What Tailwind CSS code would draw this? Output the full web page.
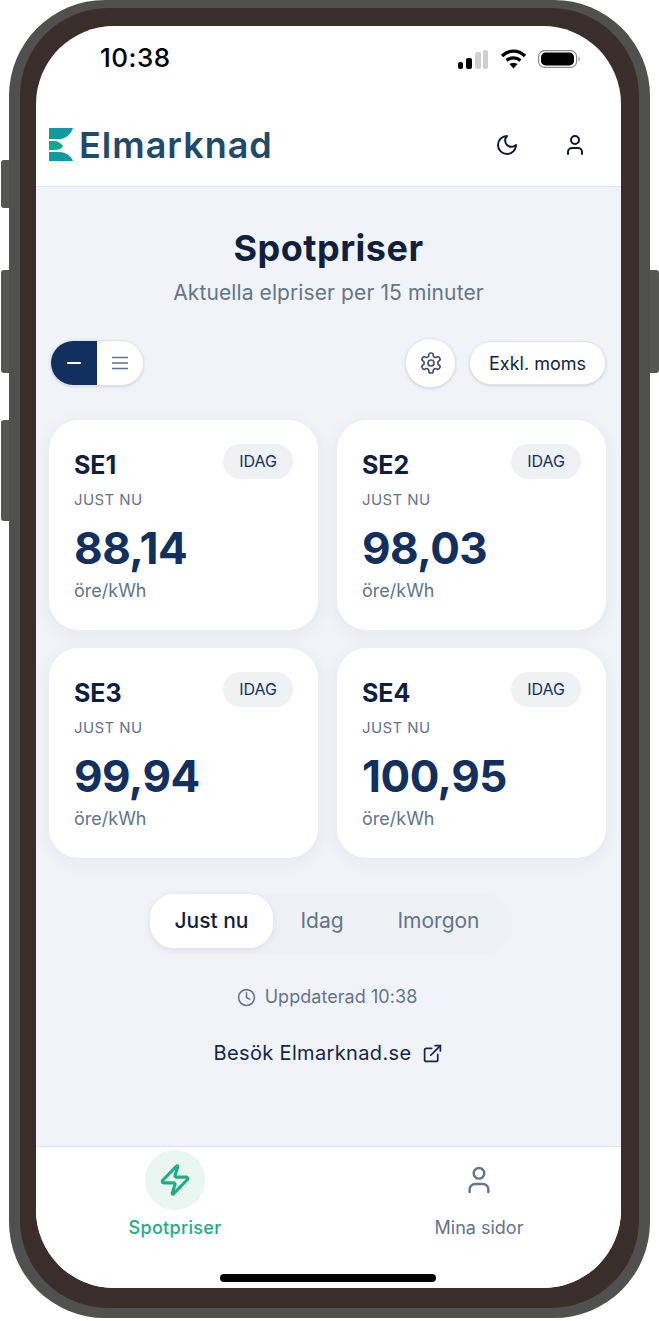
<!DOCTYPE html>
<html lang="sv">
<head>
    <meta charset="UTF-8">
    <meta name="viewport" content="width=device-width, initial-scale=1.0">
    <title>Elmarknad Spotpriser</title>
    <script src="https://cdn.jsdelivr.net/npm/@tailwindcss/browser@4"></script>
</head>
<body class="bg-white font-['Inter',sans-serif]">
    <div class="relative h-[1321px] w-[659px] overflow-hidden">
        <!-- Side buttons -->
        <div class="absolute left-[1px] top-[160px] h-[48px] w-[11px] rounded-l-[3px] bg-[#565654]"></div>
        <div class="absolute left-[1px] top-[270px] h-[103px] w-[11px] rounded-l-[3px] bg-[#565654]"></div>
        <div class="absolute left-[1px] top-[420px] h-[101px] w-[11px] rounded-l-[3px] bg-[#565654]"></div>
        <div class="absolute left-[647px] top-[270px] h-[103px] w-[12px] rounded-r-[3px] bg-[#565654]"></div>

        <!-- Phone frame -->
        <div class="absolute left-[9px] top-0 h-[1318px] w-[641px] rounded-[96px] bg-[#50504e] pl-[11px] pr-[11px] pt-[8px] pb-[10px]">
            <div class="h-full w-full rounded-[88px] bg-[#3a2e2d] pl-[16px] pr-[18px] pt-[18px] pb-[20px]">
                <div class="flex h-full w-full flex-col overflow-hidden rounded-[78px] bg-white">
                    <!-- Status bar -->
                    <div class="flex h-[62px] shrink-0 items-end justify-between pl-[64px] pr-[40px]">
                        <span class="mb-[14px] text-[26px] leading-[32px] font-medium tracking-[0.5px] text-black">10:38</span>
                        <div class="mb-[19px] flex items-center gap-[11px]">
                            <svg width="31" height="19" viewBox="0 0 31 19">
                                <rect x="0" y="12" width="5" height="7" rx="2" fill="#000"/>
                                <rect x="8" y="8" width="6" height="11" rx="2" fill="#000"/>
                                <rect x="17" y="2" width="6" height="17" rx="2" fill="#cfcfcf"/>
                                <rect x="25" y="0" width="5" height="19" rx="2" fill="#cfcfcf"/>
                            </svg>
                            <svg width="27" height="20" viewBox="0 0 27 20" fill="none" stroke="#000" stroke-width="3.4">
                                <path d="M2 7 C9 0.5 18 0.5 25 7"/>
                                <path d="M6.5 11.5 C10.5 8 16.5 8 20.5 11.5"/>
                                <path d="M13.5 19.5 L9.5 15 C11.5 13.6 15.5 13.6 17.5 15 Z" fill="#000" stroke="none"/>
                            </svg>
                            <svg width="43" height="20" viewBox="0 0 43 20" fill="none">
                                <rect x="0.6" y="1.6" width="38" height="16.8" rx="6" stroke="#8a8a8a" stroke-width="1.2"/>
                                <rect x="3" y="3.6" width="33" height="12.8" rx="4.5" fill="#000"/>
                                <path d="M40.5 7.5 C42 8 42 12 40.5 12.5 Z" fill="#8a8a8a"/>
                            </svg>
                        </div>
                    </div>

                    <!-- Header -->
                    <header class="flex h-[99px] shrink-0 items-center justify-between border-b border-[#e3e8ee] pl-[13px] pr-[34px] pt-[16px]">
                        <div class="flex items-center gap-[6px]">
                            <svg width="24" height="34" viewBox="0 0 24 34">
                                <path d="M0 0 H24 C22 6 17 11 10 11 H0 Z" fill="#0f9aa0"/>
                                <path d="M0 13 H5 C9 13 12 15 14 18 C12 21 9 22 5 22 H0 Z" fill="#12a58f"/>
                                <path d="M0 24 H10 C17 24 22 28 24 33 H0 Z" fill="#0f9aa0"/>
                            </svg>
                            <span class="text-[36px] leading-none font-semibold tracking-[1px] text-[#1f4a6b]">Elmarknad</span>
                        </div>
                        <div class="flex items-center gap-[44px]">
                            <svg class="h-[24px] w-[24px]" viewBox="0 0 24 24" fill="none" stroke="#0f1b33" stroke-width="2" stroke-linecap="round" stroke-linejoin="round">
                                <path d="M12 3a6 6 0 0 0 9 9 9 9 0 1 1-9-9Z"/>
                            </svg>
                            <svg class="h-[24px] w-[24px]" viewBox="0 0 24 24" fill="none" stroke="#0f1b33" stroke-width="2" stroke-linecap="round" stroke-linejoin="round">
                                <circle cx="12" cy="7" r="4"/>
                                <path d="M19 21v-2a4 4 0 0 0-4-4H9a4 4 0 0 0-4 4v2"/>
                            </svg>
                        </div>
                    </header>

                    <!-- Main -->
                    <main class="flex min-h-0 flex-1 flex-col items-center bg-[#f0f4f8] px-[13px] pt-[40px]">
                        <h1 class="text-[36px] leading-[42px] font-bold tracking-[0.5px] text-[#0f1f3d]">Spotpriser</h1>
                        <p class="mt-[10px] text-[21px] leading-[28px] tracking-[0.1px] text-[#64748b]">Aktuella elpriser per 15 minuter</p>

                        <div class="mt-[31px] flex w-[557px] items-center justify-between self-start">
                            <div class="ml-[1px] flex h-[46px] w-[94px] overflow-hidden rounded-full border border-[#e0e5ea] bg-white shadow-sm">
                                <div class="flex w-[46px] items-center justify-center bg-[#12305f]">
                                    <span class="h-[2px] w-[14px] rounded bg-white"></span>
                                </div>
                                <div class="flex flex-1 items-center justify-center">
                                    <svg class="h-[20px] w-[20px]" viewBox="0 0 20 20" fill="none" stroke="#64748b" stroke-width="1.6">
                                        <path d="M2 4.5h16M2 10h16M2 15.5h16"/>
                                    </svg>
                                </div>
                            </div>
                            <div class="flex items-center gap-[13px]">
                                <div class="flex h-[50px] w-[51px] items-center justify-center rounded-full border border-[#e0e5ea] bg-white shadow-sm">
                                    <svg class="h-[24px] w-[24px]" viewBox="0 0 24 24" fill="none" stroke="#475569" stroke-width="1.7" stroke-linecap="round" stroke-linejoin="round">
                                        <path d="M12.22 2h-.44a2 2 0 0 0-2 2v.18a2 2 0 0 1-1 1.73l-.43.25a2 2 0 0 1-2 0l-.15-.08a2 2 0 0 0-2.73.73l-.22.38a2 2 0 0 0 .73 2.73l.15.1a2 2 0 0 1 1 1.72v.51a2 2 0 0 1-1 1.74l-.15.09a2 2 0 0 0-.73 2.73l.22.38a2 2 0 0 0 2.73.73l.15-.08a2 2 0 0 1 2 0l.43.25a2 2 0 0 1 1 1.73V20a2 2 0 0 0 2 2h.44a2 2 0 0 0 2-2v-.18a2 2 0 0 1 1-1.73l.43-.25a2 2 0 0 1 2 0l.15.08a2 2 0 0 0 2.73-.73l.22-.39a2 2 0 0 0-.73-2.73l-.15-.08a2 2 0 0 1-1-1.74v-.5a2 2 0 0 1 1-1.74l.15-.09a2 2 0 0 0 .73-2.73l-.22-.38a2 2 0 0 0-2.73-.73l-.15.08a2 2 0 0 1-2 0l-.43-.25a2 2 0 0 1-1-1.73V4a2 2 0 0 0-2-2z"/>
                                        <circle cx="12" cy="12" r="3"/>
                                    </svg>
                                </div>
                                <div class="flex h-[44px] w-[137px] items-center justify-center rounded-full border border-[#e0e5ea] bg-white text-[18px] text-[#0f1f3d] shadow-sm">Exkl. moms</div>
                            </div>
                        </div>

                        <!-- Price cards -->
                        <div class="mt-[32px] grid w-[557px] grid-cols-2 gap-x-[19px] gap-y-[18px] self-start">
                            <div class="relative h-[210px] rounded-[30px] bg-white pl-[25px] pt-[27px] shadow-[0_4px_20px_rgba(15,31,61,0.05)]">
                                <span class="absolute right-[25px] top-[24px] flex h-[35px] w-[70px] items-center justify-center rounded-full bg-[#eef2f5] pb-[2px] text-[16px] text-[#12305f]">IDAG</span>
                                <div class="text-[25px] leading-[36px] font-bold text-[#0f1f3d]">SE1</div>
                                <div class="mt-[7px] text-[15px] leading-[20px] tracking-[0.4px] text-[#64748b]">JUST NU</div>
                                <div class="mt-[9px] text-[44px] leading-[58px] font-bold tracking-[-0.5px] text-[#12305f]">88,14</div>
                                <div class="mt-[2px] text-[18px] leading-[24px] text-[#64748b]">öre/kWh</div>
                            </div>
                            <div class="relative h-[210px] rounded-[30px] bg-white pl-[25px] pt-[27px] shadow-[0_4px_20px_rgba(15,31,61,0.05)]">
                                <span class="absolute right-[25px] top-[24px] flex h-[35px] w-[70px] items-center justify-center rounded-full bg-[#eef2f5] pb-[2px] text-[16px] text-[#12305f]">IDAG</span>
                                <div class="text-[25px] leading-[36px] font-bold text-[#0f1f3d]">SE2</div>
                                <div class="mt-[7px] text-[15px] leading-[20px] tracking-[0.4px] text-[#64748b]">JUST NU</div>
                                <div class="mt-[9px] text-[44px] leading-[58px] font-bold tracking-[-0.5px] text-[#12305f]">98,03</div>
                                <div class="mt-[2px] text-[18px] leading-[24px] text-[#64748b]">öre/kWh</div>
                            </div>
                            <div class="relative h-[210px] rounded-[30px] bg-white pl-[25px] pt-[27px] shadow-[0_4px_20px_rgba(15,31,61,0.05)]">
                                <span class="absolute right-[25px] top-[24px] flex h-[35px] w-[70px] items-center justify-center rounded-full bg-[#eef2f5] pb-[2px] text-[16px] text-[#12305f]">IDAG</span>
                                <div class="text-[25px] leading-[36px] font-bold text-[#0f1f3d]">SE3</div>
                                <div class="mt-[7px] text-[15px] leading-[20px] tracking-[0.4px] text-[#64748b]">JUST NU</div>
                                <div class="mt-[9px] text-[44px] leading-[58px] font-bold tracking-[-0.5px] text-[#12305f]">99,94</div>
                                <div class="mt-[2px] text-[18px] leading-[24px] text-[#64748b]">öre/kWh</div>
                            </div>
                            <div class="relative h-[210px] rounded-[30px] bg-white pl-[25px] pt-[27px] shadow-[0_4px_20px_rgba(15,31,61,0.05)]">
                                <span class="absolute right-[25px] top-[24px] flex h-[35px] w-[70px] items-center justify-center rounded-full bg-[#eef2f5] pb-[2px] text-[16px] text-[#12305f]">IDAG</span>
                                <div class="text-[25px] leading-[36px] font-bold text-[#0f1f3d]">SE4</div>
                                <div class="mt-[7px] text-[15px] leading-[20px] tracking-[0.4px] text-[#64748b]">JUST NU</div>
                                <div class="mt-[9px] text-[44px] leading-[58px] font-bold tracking-[-0.5px] text-[#12305f]">100,95</div>
                                <div class="mt-[2px] text-[18px] leading-[24px] text-[#64748b]">öre/kWh</div>
                            </div>
                        </div>

                        <!-- Range tabs -->
                        <div class="ml-[101px] mt-[36px] flex h-[60px] w-[362px] items-start self-start rounded-[26px] bg-[#eef2f6] text-[21px]">
                            <div class="flex h-[54px] w-[123px] items-center justify-center rounded-[24px] bg-white font-medium text-[#0f1f3d] shadow-[0_2px_8px_rgba(15,31,61,0.08)]">Just nu</div>
                            <div class="flex h-[54px] w-[98px] items-center justify-center text-[#64748b]">Idag</div>
                            <div class="flex h-[54px] w-[135px] items-center justify-center text-[#64748b]">Imorgon</div>
                        </div>

                        <div class="ml-[-3px] mt-[31px] flex items-center gap-[9px] text-[18px] leading-[24px] tracking-[0.05px] text-[#64748b]">
                            <svg class="h-[19px] w-[19px]" viewBox="0 0 24 24" fill="none" stroke="#64748b" stroke-width="2" stroke-linecap="round" stroke-linejoin="round">
                                <circle cx="12" cy="12" r="10"/>
                                <path d="M12 6v6l4 2"/>
                            </svg>
                            <span>Uppdaterad 10:38</span>
                        </div>

                        <div class="mt-[30px] flex items-center gap-[11px] text-[20px] leading-[28px] tracking-[0.35px] text-[#12264d]">
                            <span>Besök Elmarknad.se</span>
                            <svg class="h-[21px] w-[21px]" viewBox="0 0 24 24" fill="none" stroke="#12264d" stroke-width="2" stroke-linecap="round" stroke-linejoin="round">
                                <path d="M18 13v6a2 2 0 0 1-2 2H5a2 2 0 0 1-2-2V8a2 2 0 0 1 2-2h6"/>
                                <path d="M15 3h6v6"/>
                                <path d="M10 14 21 3"/>
                            </svg>
                        </div>
                    </main>

                    <!-- Bottom nav -->
                    <nav class="relative flex h-[142px] shrink-0 border-t border-[#dfe3e8] bg-white">
                        <div class="flex w-[278px] flex-col items-center pt-[3px]">
                            <div class="flex h-[60px] w-[60px] items-center justify-center rounded-full bg-[#e9f6f2]">
                                <svg class="h-[34px] w-[34px]" viewBox="0 0 24 24" fill="none" stroke="#1fae84" stroke-width="2.2" stroke-linecap="round" stroke-linejoin="round">
                                    <path d="M4 14a1 1 0 0 1-.78-1.63l9.9-10.2a.5.5 0 0 1 .86.46l-1.92 6.02A1 1 0 0 0 13 10h7a1 1 0 0 1 .78 1.63l-9.9 10.2a.5.5 0 0 1-.86-.46l1.92-6.02A1 1 0 0 0 11 14z"/>
                                </svg>
                            </div>
                            <span class="mt-[6px] text-[18px] leading-[24px] font-medium tracking-[0.3px] text-[#1fae84]">Spotpriser</span>
                        </div>
                        <div class="ml-[70px] flex w-[190px] flex-col items-center pt-[3px]">
                            <div class="flex h-[60px] w-[60px] items-center justify-center">
                                <svg class="h-[32px] w-[32px]" viewBox="0 0 24 24" fill="none" stroke="#64748b" stroke-width="1.8" stroke-linecap="round" stroke-linejoin="round">
                                    <circle cx="12" cy="7" r="4"/>
                                    <path d="M19 21v-2a4 4 0 0 0-4-4H9a4 4 0 0 0-4 4v2"/>
                                </svg>
                            </div>
                            <span class="mt-[6px] text-[18px] leading-[24px] text-[#64748b]">Mina sidor</span>
                        </div>
                        <div class="absolute bottom-[6px] left-[184px] h-[8px] w-[216px] rounded-full bg-black"></div>
                    </nav>
                </div>
            </div>
        </div>
    </div>
</body>
</html>
